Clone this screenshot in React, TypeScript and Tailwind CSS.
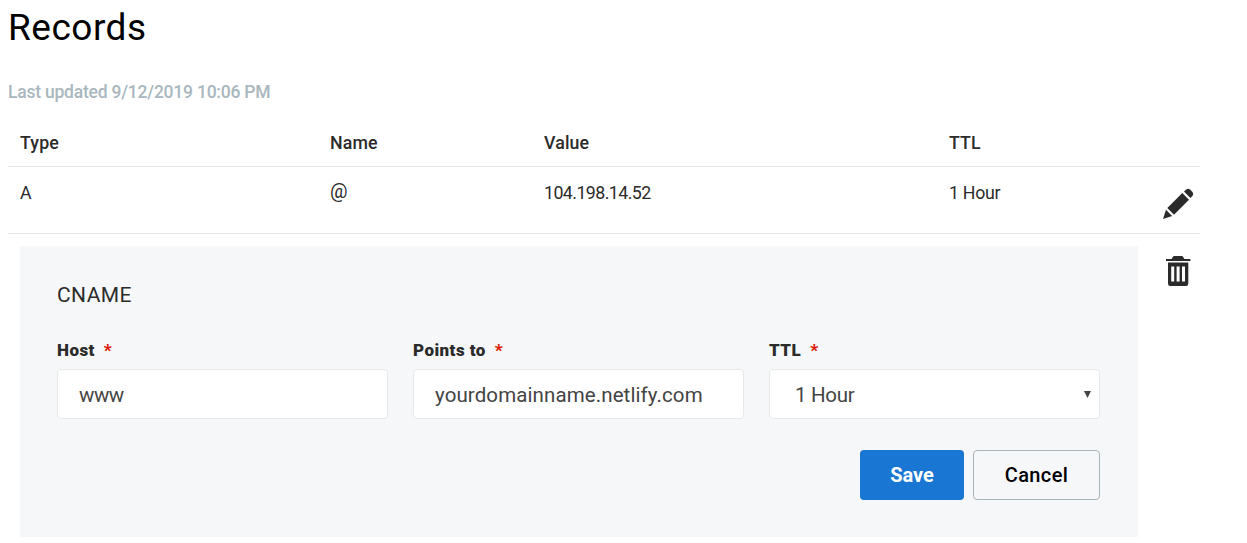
import React from "react";

const inputBox =
  "flex h-[50px] w-full items-center rounded border border-[#e6e8ea] bg-white pt-0.5 text-[20.5px] leading-[28px] text-[#444]";

function FieldLabel({ text }: { text: string }) {
  return (
    <label className="flex h-5 items-center gap-[9px] text-[17px] leading-5 font-black text-[#2b2b2b]">
      <span className="tracking-[0.45px]">{text}</span>
      <span className="text-[#db1802]">*</span>
    </label>
  );
}

function PencilIcon() {
  return (
    <svg width="40" height="38" viewBox="0 0 40 38" fill="#2b2b2b" aria-hidden="true">
      <path d="M5 35 L8 25.8 L14.2 32 Z" />
      <path d="M9.3 24 L24.3 9 L31 15.7 L16 30.7 Z" />
      <path d="M26 7.6 L28.3 5.4 Q30.2 4 32 5.4 L34.5 7.9 Q36 9.8 34.6 11.7 L32.4 14 Z" />
    </svg>
  );
}

function TrashIcon() {
  return (
    <svg width="40" height="40" viewBox="0 0 40 40" fill="#2b2b2b" aria-hidden="true">
      <path d="M8 9 H13.6 L15.1 6.6 Q15.5 6 16.2 6 H23.8 Q24.5 6 24.9 6.6 L26.4 9 H32.4 V11 H8 Z" />
      <path
        fillRule="evenodd"
        d="M10 12.4 H30.3 V33.5 Q30.3 36 28 36 H12.3 Q10 36 10 33.5 Z M13.2 16.6 V31.6 H16.2 V16.6 Z M18.6 16.6 V31.6 H21.6 V16.6 Z M24 16.6 V31.6 H27 V16.6 Z"
      />
    </svg>
  );
}

const columns = "grid grid-cols-[310px_214px_405px_195px_1fr] pl-3 text-[17.75px] leading-6 text-[#2b2b2b]";

export default function App() {
  return (
    <main className="h-[543px] w-[1247px] overflow-hidden bg-white pl-2 font-['Roboto','Liberation_Sans',sans-serif]">
      <h1 className="h-[80px] pt-[5px] text-[37px] leading-[46px] tracking-[0.5px] text-black">
        <span>Records</span>
      </h1>
      <p className="h-[51px] text-[17.5px] leading-6 font-medium tracking-[-0.22px] text-[#a9b7be]">
        <span>Last updated 9/12/2019 10:06 PM</span>
      </p>
      <section className="w-[1192px]">
        <div className={`${columns} h-[36px] border-b border-[#e6e8ea] font-medium tracking-[0.15px]`}>
          <span>Type</span>
          <span>Name</span>
          <span>Value</span>
          <span>TTL</span>
        </div>
        <div className={`${columns} h-[67px] border-b border-[#e6e8ea] pt-[14px]`}>
          <span>A</span>
          <span className="-mt-px text-[19.5px]">@</span>
          <span className="tracking-[-0.55px]">104.198.14.52</span>
          <span className="tracking-[-0.3px]">1 Hour</span>
          <span className="-mr-3 pt-[3px] pl-[14px]">
            <PencilIcon />
          </span>
        </div>
        <div className="flex pt-3 pl-3">
          <form className="h-[291px] w-[1118px] shrink-0 bg-[#f5f7f8] pt-[35px] pr-[38px] pl-[37px]">
            <h2 className="h-[59px] text-[21px] leading-[28px] tracking-[0.4px] text-[#2b2b2b]">
              <span>CNAME</span>
            </h2>
            <div className="grid grid-cols-[331px_331px_331px] gap-x-[25px]">
              <div>
                <FieldLabel text="Host" />
                <div className={`${inputBox} mt-[9px] pl-[21px] tracking-[-0.5px]`}>www</div>
              </div>
              <div>
                <FieldLabel text="Points to" />
                <div className={`${inputBox} mt-[9px] pl-[21px] tracking-[0.1px]`}>yourdomainname.netlify.com</div>
              </div>
              <div>
                <FieldLabel text="TTL" />
                <div className={`${inputBox} mt-[9px] justify-between pr-[8px] pl-[25px]`}>
                  <span className="tracking-[-0.3px]">1 Hour</span>
                  <svg className="-mt-0.5" width="7" height="7" viewBox="0 0 7 7" fill="#444" aria-hidden="true">
                    <path d="M0 0H7L3.5 7Z" />
                  </svg>
                </div>
              </div>
            </div>
            <div className="mt-[31px] flex justify-end gap-[9px]">
              <button type="button" className="h-[50px] w-[104px] rounded bg-[#1976d2] text-[20px] leading-7 font-bold text-white">
                Save
              </button>
              <button type="button" className="h-[50px] w-[127px] rounded border border-[#a9b4ba] text-[20px] leading-7 font-medium tracking-[0.4px] text-black">
                Cancel
              </button>
            </div>
          </form>
          <div className="-mr-3 pt-1 pl-5">
            <TrashIcon />
          </div>
        </div>
      </section>
    </main>
  );
}
